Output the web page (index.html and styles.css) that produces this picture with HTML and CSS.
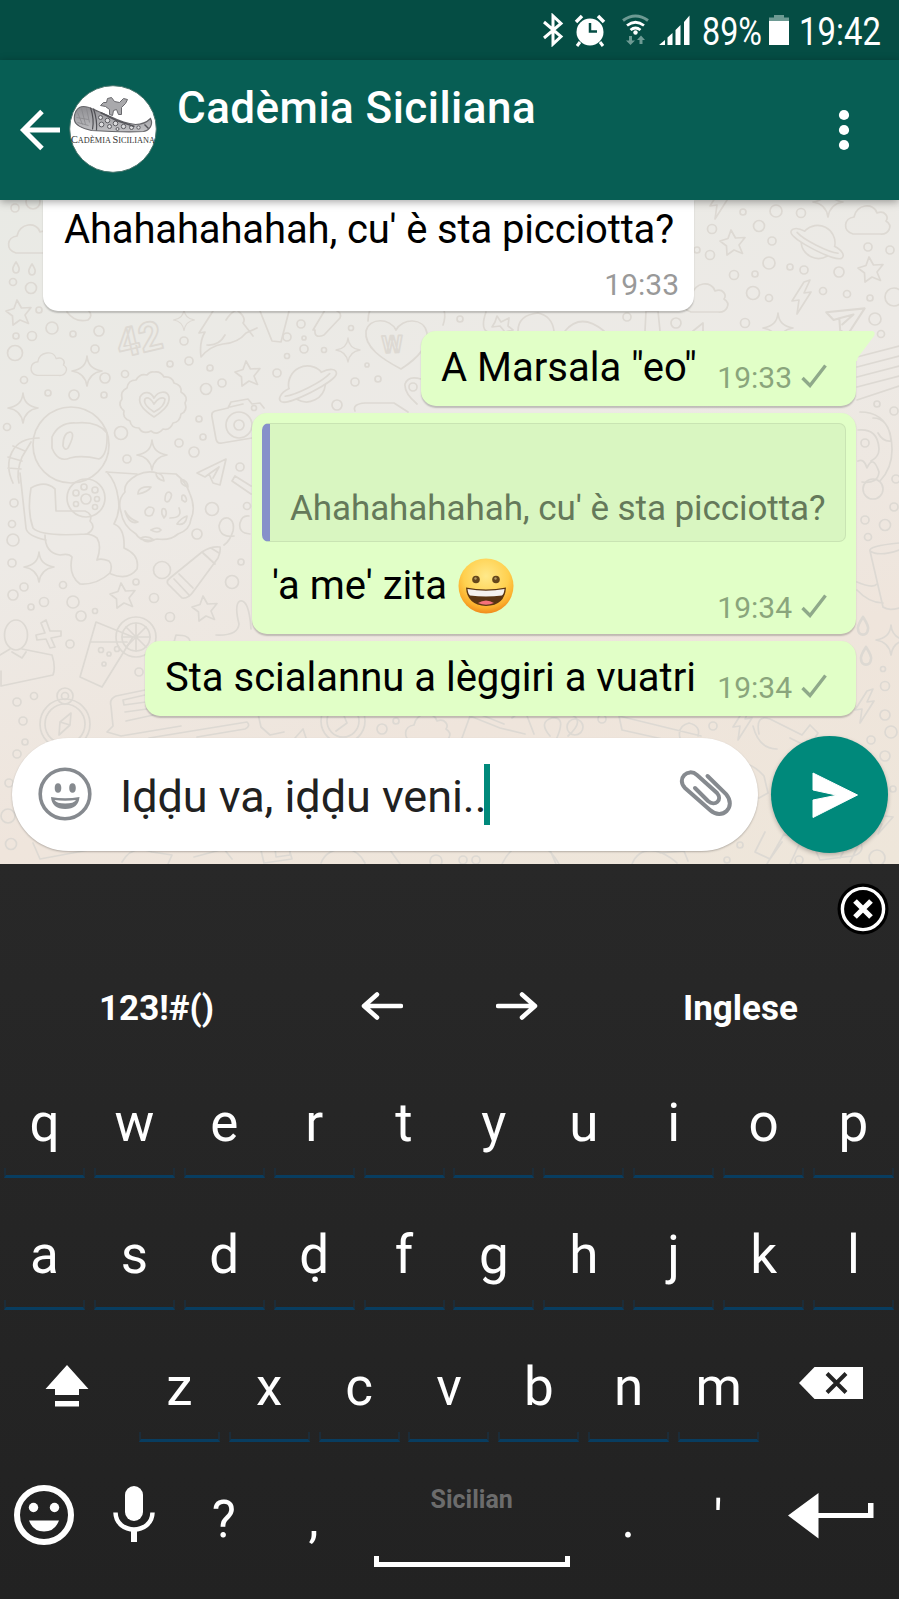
FILE: index.html
```html
<!DOCTYPE html>
<html lang="scn">
<head>
<meta charset="utf-8">
<title>Cadèmia Siciliana</title>
<link rel="stylesheet" href="styles.css">
</head>
<body>
<div class="phone">
  <div class="status">
    <svg class="st-bt" width="22" height="34" viewBox="0 0 22 34" fill="none" stroke="#fff" stroke-width="3"><path d="M2 9 19 23.500 11 31V3l8 7.500L2 25"/></svg>
    <svg class="st-alarm" width="32" height="34" viewBox="574 14 32 34"><circle cx="590" cy="32" r="13.500" fill="#fff"/><path d="M576 22l6-6M604 22l-6-6" stroke="#fff" stroke-width="3.500"/><path d="M580 42l-3 4M600 42l3 4" stroke="#fff" stroke-width="3"/><path d="M590 23v8.500h7" fill="none" stroke="#054d44" stroke-width="2.500"/></svg>
    <svg class="st-wifi" width="28" height="34" viewBox="621 13 28 34" fill="none"><path d="M623 20.500q12.500-9 25 0" stroke="#6d9a93" stroke-width="3"/><path d="M627 25.500q8.500-6.500 17 0M630.500 30q5-4 10 0" stroke="#fff" stroke-width="2.800"/><circle cx="635.500" cy="32.500" r="2.200" fill="#fff"/><path d="M629 36h3v4.500h3l-4.500 4.500-4.500-4.500h3zM639.500 44h3v-4h2.500l-4-4.500-4 4.500h2.500z" fill="#6d9a93"/></svg>
    <svg class="st-signal" width="31" height="31" viewBox="0 0 31 31" fill="#fff"><path d="M0 30 6 25v5zM8.500 22.500l5-4.500V30h-5zM16.500 15l5-5v20h-5zM25 7l5.500-6.500V30H25z"/></svg>
    <span class="st-text st-pct">89%</span>
    <svg class="st-batt" width="20" height="31" viewBox="0 0 20 31"><path d="M5 0h10v2.500h5V6H0V2.500h5z" fill="#6d9a93"/><path d="M0 6h20v24H0z" fill="#fff"/></svg>
    <span class="st-text st-clock">19:42</span>
  </div>

  <header class="header">
    <svg class="back" width="42" height="42" viewBox="19 109 42 42" fill="none" stroke="#fff" stroke-width="5"><path d="M60 130H24M42 111.500 23.500 130 42 148.500"/></svg>
    <svg class="avatar" width="88" height="88" viewBox="69.500 85.500 88 88">
      <defs><linearGradient id="boot" x1="0" y1="0" x2="0" y2="1"><stop offset="0" stop-color="#8d8d91"/><stop offset="1" stop-color="#c2c2c5"/></linearGradient></defs>
      <circle cx="113.500" cy="129.500" r="43.300" fill="#fff" stroke="#49746c"/>
      <path d="M75 121c-1-8 3-14 9-14 5 0 10 3 15 5l14 6c8 4 15 6 23 7 6 0 11-2 15-6 3 6-1 12-7 13-18 1-36 0-52-1-9-2-16-5-17-10z" fill="url(#boot)" stroke="#66666a" stroke-width="1.200"/>
      <path d="M91 108q4 12 2 22M94 109q4 12 3 22" fill="none" stroke="#505055" stroke-width="1.200"/>
      <path d="M78 113l5 12M82 109l4 16M87 109l3 14M77 118l12 2M78 123l11 3" stroke="#88888c" stroke-width=".8"/>
      <g fill="#dcdcde" stroke="#5d5d62" stroke-width="1"><circle cx="101" cy="118" r="2"/><circle cx="108" cy="121" r="2.300"/><circle cx="102" cy="125" r="2.400"/><circle cx="116" cy="124" r="2.300"/><circle cx="110" cy="127" r="2"/><circle cx="124" cy="127" r="2.200"/><circle cx="118" cy="129.500" r="1.500"/><circle cx="132" cy="128" r="2"/><circle cx="139" cy="128" r="1.700"/></g>
      <path d="M101 113l8 4 8 4 9 3 9 3M145 125l4 4" fill="none" stroke="#55555a" stroke-width="1.400"/>
      <path d="M101 106l3-3 3 0 1-4 4-1 3 4 5 1 4-4 4 1-2 4-4 4 0 7-3 0-2-5-3 1-1 5-3-1 0-5-4-3z" fill="#a9a9ac" stroke="#68686c"/>
      <text class="ava-text" x="71.500" y="143" textLength="84" lengthAdjust="spacingAndGlyphs"><tspan font-size="10">C</tspan>ADÈMIA <tspan font-size="10">S</tspan>ICILIANA</text>
    </svg>
    <h1 class="title">Cadèmia Siciliana</h1>
    <svg class="more" width="12" height="42" viewBox="838 109 12 42" fill="#fff"><circle cx="844" cy="115" r="5.100"/><circle cx="844" cy="130" r="5.100"/><circle cx="844" cy="145" r="5.100"/></svg>
  </header>

  <main class="chat">
    <svg class="wallpaper" width="899" height="664" viewBox="0 200 899 664" aria-hidden="true">
      <defs>
        <path id="star" d="M-2-13 2.500-5 12-5.500 6 2 9.500 10.500 1 7-6 12-6.500 3-13-2-5-4.500Z"/>
        <path id="spark" d="M0-15Q1-2 15 0 2 2 0 15-2 2-15 0-1-2 0-15Z"/>
        <path id="cloud" d="M-15 13C-26 10-24-3-14-4-12-17 6-19 9-8 17-11 21-4 18 0 26 5 20 14 12 13Z"/>
        <g id="planet"><path d="M-18-5A19 19 0 0 1 18-5M-16 9A19 19 0 0 0 16 9"/><path d="M-18-4C-28-4-33 0-31 4-27 11 27 11 31 4 33 0 28-4 18-4"/><path d="M-25 1C-15 5 15 5 25 1"/></g>
        <path id="drop" d="M0-5Q-4 1-3 3A3 3 0 0 0 3 3Q4 1 0-5Z"/>
        <path id="bolt" d="M2-14-10 5-3 4-5 18 9-4 2-3 8-16Z"/>
        <path id="plane" d="M15-14-14 0-6 4-2 1 2 10 9 12ZM-2 1 8-6M2 5 8-6"/>
      </defs>
      <g class="doodle">
        <g id="bubbles">
          <circle cx="13" cy="282" r="3.500"/><circle cx="31" cy="288" r="5.500"/><circle cx="39" cy="310" r="3"/><circle cx="52" cy="328" r="6"/><circle cx="16" cy="336" r="3"/><circle cx="32" cy="336" r="4.500"/><circle cx="73" cy="334" r="3"/><circle cx="99" cy="331" r="5"/><circle cx="15" cy="353" r="7.500"/><circle cx="95" cy="349" r="4"/><circle cx="105" cy="378" r="5"/><circle cx="125" cy="374" r="3.500"/><circle cx="24" cy="380" r="3.500"/><circle cx="48" cy="393" r="3"/><circle cx="74" cy="395" r="5"/><circle cx="104" cy="395" r="3"/><circle cx="15" cy="208" r="4"/><circle cx="33" cy="202" r="7"/>
          <circle cx="184" cy="341" r="4"/><circle cx="189" cy="361" r="4"/><circle cx="170" cy="364" r="3"/><circle cx="210" cy="368" r="3"/><circle cx="222" cy="383" r="4"/><circle cx="206" cy="389" r="5.500"/><circle cx="199" cy="419" r="3"/><circle cx="277" cy="373" r="4"/><circle cx="301" cy="324" r="4"/><circle cx="287" cy="337" r="4"/><circle cx="304" cy="338" r="2"/><circle cx="304" cy="349" r="4"/><circle cx="324" cy="350" r="2.500"/><circle cx="287" cy="356" r="2.500"/><circle cx="351" cy="328" r="2.500"/><circle cx="367" cy="365" r="2"/><circle cx="355" cy="382" r="4"/><circle cx="378" cy="379" r="3"/><circle cx="337" cy="405" r="5"/>
          <circle cx="7" cy="427" r="3.500"/><circle cx="121" cy="433" r="6.500"/><circle cx="179" cy="443" r="4"/><circle cx="203" cy="437" r="3"/><circle cx="194" cy="452" r="5"/><circle cx="127" cy="459" r="4"/><circle cx="240" cy="467" r="4"/><circle cx="212" cy="509" r="6.500"/><circle cx="247" cy="506" r="3.500"/><circle cx="197" cy="534" r="5"/><circle cx="14" cy="503" r="4"/><circle cx="12" cy="524" r="3.500"/><circle cx="13" cy="540" r="6"/><circle cx="12" cy="563" r="4"/><circle cx="24" cy="587" r="4"/><circle cx="13" cy="595" r="5"/><circle cx="31" cy="607" r="3"/><circle cx="44" cy="602" r="4.500"/><circle cx="63" cy="585" r="3.500"/><circle cx="73" cy="602" r="6"/><circle cx="81" cy="616" r="5"/><circle cx="95" cy="611" r="2.500"/><circle cx="136" cy="582" r="3"/><circle cx="162" cy="570" r="8.500"/><circle cx="154" cy="598" r="4.500"/><circle cx="241" cy="562" r="3"/><circle cx="232" cy="582" r="6.500"/><circle cx="170" cy="617" r="4.500"/><circle cx="70" cy="644" r="4"/><circle cx="17" cy="702" r="4"/><circle cx="34" cy="696" r="3.500"/><circle cx="139" cy="672" r="4"/>
          <circle cx="743" cy="212" r="3"/><circle cx="776" cy="211" r="6"/><circle cx="801" cy="213" r="4.500"/><circle cx="759" cy="226" r="5.500"/><circle cx="712" cy="229" r="4.500"/><circle cx="772" cy="241" r="4"/><circle cx="710" cy="255" r="4.500"/><circle cx="697" cy="250" r="3"/><circle cx="868" cy="247" r="4"/><circle cx="890" cy="250" r="4"/><circle cx="769" cy="263" r="6"/><circle cx="790" cy="267" r="3"/><circle cx="804" cy="270" r="4"/><circle cx="839" cy="272" r="5"/><circle cx="734" cy="275" r="4.500"/><circle cx="755" cy="274" r="3"/><circle cx="753" cy="293" r="6.500"/><circle cx="769" cy="298" r="3.500"/><circle cx="823" cy="291" r="3.500"/><circle cx="847" cy="294" r="3.500"/><circle cx="870" cy="298" r="3"/><circle cx="894" cy="297" r="9"/><circle cx="875" cy="319" r="6"/><circle cx="881" cy="334" r="3.500"/><circle cx="676" cy="323" r="5"/><circle cx="627" cy="317" r="4"/><circle cx="745" cy="323" r="4.500"/><circle cx="460" cy="319" r="3"/><circle cx="877" cy="404" r="3"/><circle cx="894" cy="411" r="4"/>
          <circle cx="896" cy="479" r="4"/><circle cx="894" cy="507" r="4"/><circle cx="865" cy="520" r="4"/><circle cx="885" cy="525" r="5.500"/><circle cx="868" cy="537" r="3.500"/><circle cx="883" cy="669" r="2.500"/><circle cx="885" cy="686" r="4.500"/><circle cx="885" cy="715" r="5"/><circle cx="891" cy="732" r="6"/><circle cx="871" cy="740" r="4"/><circle cx="885" cy="756" r="5"/><circle cx="893" cy="789" r="3"/><circle cx="740" cy="845" r="3"/><circle cx="727" cy="860" r="3"/><circle cx="799" cy="860" r="4"/><circle cx="877" cy="858" r="8"/><circle cx="713" cy="726" r="4"/><circle cx="602" cy="719" r="4"/><circle cx="575" cy="727" r="8"/><circle cx="382" cy="729" r="5"/><circle cx="396" cy="721" r="3"/><circle cx="23" cy="721" r="4"/><circle cx="25" cy="742" r="3"/><circle cx="17" cy="754" r="4"/><circle cx="9" cy="783" r="4"/><circle cx="8" cy="816" r="7"/><circle cx="11" cy="844" r="5.500"/><circle cx="463" cy="860" r="4"/><circle cx="476" cy="860" r="4"/><circle cx="436" cy="861" r="6"/>
        </g>
        <use href="#star" x="19" y="313"/><use href="#star" x="248" y="374"/><use href="#star" x="733" y="243"/><use href="#star" x="871" y="270"/><use href="#star" x="123" y="596"/><use href="#star" x="205" y="609"/>
        <use href="#spark" x="87" y="371"/><use href="#spark" x="23" y="408"/><use href="#spark" x="39" y="567"/><use href="#spark" x="891" y="640"/><use href="#spark" x="152" y="455"/>
        <use href="#spark" transform="translate(184 320) scale(.7)"/><use href="#spark" transform="translate(348 350) scale(.8)"/><use href="#spark" x="778" y="328"/><use href="#spark" x="828" y="202"/><use href="#bolt" x="720" y="201"/>
        <use href="#cloud" x="31" y="240"/><use href="#cloud" x="868" y="221"/><use href="#cloud" x="706" y="299"/><use href="#cloud" transform="translate(49 365) scale(.8)"/><use href="#cloud" x="428" y="729"/>
        <use href="#planet" transform="translate(307 384) rotate(-27)"/><use href="#planet" transform="translate(818 242) rotate(27) scale(.92)"/>
        <use href="#drop" x="16" y="267"/><use href="#drop" x="32" y="269"/><use href="#drop" transform="translate(863 625) scale(1.600)"/><use href="#drop" transform="translate(866 655) scale(1.600)"/>
        <use href="#bolt" x="802" y="296"/><use href="#bolt" x="865" y="705"/><use href="#bolt" x="743" y="722"/>
        <use href="#plane" x="211" y="473"/><use href="#plane" transform="translate(842 318) rotate(20) scale(1.200)"/>
        <text class="wall-text" transform="translate(120 358) rotate(-13)" font-size="40">42</text>
        <path d="M401 369C382 359 364 347 366 331 370 317 390 318 396 330 402 318 424 317 427 333 429 348 415 360 401 369Z"/>
        <text class="wall-text" transform="translate(382 353) rotate(-2)" font-size="24">W</text>
        <path d="M368 321q0-12 8-21M443 325q3-8 1-15M313 330l12-20q10-4 12 1 5 2 3 7l-16 17q-10 4-9-5z"/>
        <path d="M154 372q7-1 10 5 8-1 10 6 8 2 7 9 8 5 4 11 3 8-4 11-1 8-8 9-3 8-10 6-6 7-12 2-8 4-12-3-8 0-9-7-8-3-6-10-7-6-2-12-2-8 5-11 1-8 9-8 4-7 11-5 3-4 7-3Z"/>
        <path d="M154 417C145 411 138 405 140 397 144 390 151 392 154 398 158 391 167 390 169 397 170 405 163 411 154 417Z M154 412C148 408 143 403 145 399 148 396 152 400 154 404 157 399 162 396 165 399 165 405 160 409 154 412Z"/>
        <path d="M215 411l13-3 3-6 17-3 4 5 8-1 4 5M215 411q-4 1-3 6l4 22q1 5 6 4l30-5M230 407l13-3"/><circle cx="239" cy="425" r="13"/><circle cx="239" cy="425" r="5"/><circle cx="254" cy="408" r="2.500"/>
        <path d="M213 311l-14 22 6-1q-6 10-4 25 9-11 22-13 15-1 23-11l11-5M207 345q12 1 18-10M226 320q5-8 11-10 10 8 6 13l10 13M260 311l12 30 9 1 8-31M67 312q8 11 21 8 5-4 1-9"/>
        <circle cx="71" cy="445" r="38"/><path d="M52 437q7-15 24-14 22-2 31 10 1 22-8 26-17-4-29-1-12 5-18-10 0-6 0-11zM63 446q0-13 7-14 6 1-2 16-3 3-5-2M39 438q-20 0-27 14-7 14 1 31M31 442l-9 15q-6 15-3 26M8 457l14 4M8 468l13 1M13 446l12 5"/>
        <path d="M20 473l6 55q1 8 20 12M31 488q-4 23 2 40 8 9 54 6 10-6 3-13 3-7-5-10H56l-1-22q-10-9-24-1M45 535q0 18 15 20 9-2 12 2-4 18 8 27 17 1 30-11 3-8-1-12-8-3-12-1 5-14 0-22-5-4-12-4M107 472q9 10 11 25 3 14-4 27 11 4 10 24 16 7 13 21-9 12-26 5M106 472q15 1 31 2"/>
        <circle cx="86" cy="498" r="19"/><circle cx="86" cy="499" r="5"/><circle cx="76" cy="493" r="3"/><circle cx="84" cy="487" r="3"/><circle cx="95" cy="490" r="3"/><circle cx="97" cy="499" r="2.500"/><circle cx="76" cy="504" r="2.500"/><circle cx="95" cy="507" r="2.500"/>
        <path d="M137 475q11-5 20-2l19 1q10 8 14 20 6 14 1 25-1 11-13 15-8 7-21 5-16 4-21-5-13-8-15-22-4-12 4-20-2-9 12-17zM138 494q0-8 13-7-3 5-13 7M156 473q7 0 8 8-8-2-8-8M181 479q7 2 7 8-8-2-7-8M125 511q4 8 13 11-9 3-13-11M141 538q6-3 13 2-8 4-13-2M177 524q4-6 10-8-1 10-10 8M170 518q13 0 9-10M146 515q-3-5 3-8 8 0 3 8-3 2-6 0M165 500q0-8 4-8 5 2 0 9-3 2-4-1M151 530q7-4 10 0-3 4-10 0M162 514q-1-7 3-5 3 5-1 9zM182 500q-1-7 3-4 3 5 0 6z"/>
        <path d="M168 584l14 14q6 1 11-6l25-34q3-7 2-11-9-1-18 5l-32 26q-4 3-2 6zM174 579l15 16M179 574l14 14M203 553l12 11M211 548l8 5M232 481l19 13M232 481l3-5 16 10M234 536q-14 2-15-10 2-9 9-8 7 3 5 13-3 10-9 14M250 534q-12-1-10-11 2-8 9-7"/>
        <ellipse cx="16" cy="635" rx="11.500" ry="15"/><path d="M10 649l-10 6M22 649l30 6q4 12 1 20L1 686v-15M12 652l10 6 4-6M46 620l4 11 11 0v5l-10 2 4 9-5 1-4-9-9 1-1-5 9-2-4-10z"/>
        <path d="M96 622l37 15-31 50-22-10zM91 642h36"/><circle cx="136" cy="637" r="20"/><circle cx="136" cy="637" r="14"/><path d="M122 637h28M136 623v28M126 627l20 20M146 627l-20 20"/><circle cx="101" cy="650" r="2.500"/><circle cx="109" cy="654" r="2"/><circle cx="117" cy="649" r="2.500"/><circle cx="104" cy="664" r="2"/>
        <circle cx="65" cy="724" r="25"/><circle cx="65" cy="724" r="20"/><circle cx="65" cy="696" r="8"/><circle cx="65" cy="696" r="3.500"/><path d="M71 713l-11 9-1 13 11-10zM60 722l10 3"/>
        <path d="M145 690l-29 6q-7 3-5 10l2 20-6 6 14 4 60-10M145 695l-22 5 1 5 22-3M125 712l44-6M126 721l110-24 20 8 5 22 9 8 14-3M149 738l98-16q4 4-2 7l-48 8M295 738l8-9 4 12M216 635q22 1 23-11-5-20 1-23 9-2 11 28M174 642l2-7q14 0 14 7"/>
        <circle cx="343" cy="721" r="22"/><circle cx="343" cy="721" r="16"/><path d="M342 711l5 12-11 8M462 738l8-22 30 12 25 6M474 712l30 12M512 718l12-10 10 26M550 736q-12-14 2-18 15-2 4 22M568 736q18-16 2-22M619 716l82 20M619 716l3 14 54 12M680 738q-3-12 9-15 12 3 9 13M759 734q-4-20 11-15l32 16 8-10 8 8q-6 12-18 10l-10-5M753 726q6 23 24 23"/>
        <circle cx="413" cy="387" r="4"/><path d="M417 404q-13-11-12-20 3-9 16-5M355 411q-3-7 10-8h29l14 9M486 312q-6 17 2 20l12 3M497 316l4 6 8-4-1 8 5 4-8 2-5-6-8 1 3-5zM518 331q0-16 20-18 14 3 16 18M565 331q16-19 39 0M645 331l1-20h12l2 20M693 331l10-8v8"/>
        <path d="M857 357l42-11M857 367l42-11M857 377l42-11M857 387l42-11M857 400l42-14M860 412q23 0 30 21 7 30-10 48M873 418q16 0 18 23-8 1-13-8M858 430q20-2 21 19 0 8-8 12M858 461q6-3 9 7 6-14 12 4-1 12-17 10"/><circle cx="865" cy="443" r="4"/><circle cx="873" cy="489" r="10"/>
        <path d="M870 551l13 56q5 4 16 1M870 551q-2-5 29-8M870 551q9 6 29-1M857 582q16 7 20 2M857 590q12 13 26 13M759 798l9-5-4-17q-8-9-17-12-3 6 6 10M790 864l12-26M804 843l-20-9-17 30M840 858l15-28M850 862l16-32M830 850l25-46M765 832l-10 20 15 7 12-17M810 838l10 22 33-4q14-4 6-17M882 808l-8 15 8 1-4 10 15-17-8-1"/>
        <path d="M33 843l7 16 54-10 5-9M122 862q10-18 30-10l20 3-4 9M194 857l30-8 8 10M260 846l4 17 28-4-5-17zM275 848l15 0 0 7-14 2zM321 863q6-15 26-14 12 2 18 14M502 864q13-27 40-18 10 5 17 18M390 850l10 14M550 850l6 14M632 864q8-19 30-11 10 5 15 10M660 853l24-2 4 10"/>
      </g>
    </svg>

    <section class="messages">
      <div class="bubble in first">
        <p class="text">Ahahahahahah, cu' è sta picciotta?</p>
        <span class="time">19:33</span>
      </div>
      <div class="bubble out single second">
        <svg class="tail" width="22" height="32" viewBox="0 0 22 32"><path d="M0 0h17.500q3.500 1 1.500 5L4 25q-2 2-2 5H0z" fill="#e1ffc7"/></svg>
        <p class="text">A Marsala "eo"</p>
        <span class="meta"><span class="time">19:33</span><svg class="tick" width="26" height="24" viewBox="0 0 26 24"><path d="M1.500 14 9 21.500 24.500 1.500" /></svg></span>
      </div>
      <div class="bubble out reply">
        <div class="quote"><p>Ahahahahahah, cu' è sta picciotta?</p></div>
        <div class="reply-row">
          <p class="text">'a me' zita</p>
          <svg class="grin" width="56" height="56" viewBox="0 0 56 56">
            <defs><radialGradient id="face" cx=".5" cy=".32" r=".68"><stop offset="0" stop-color="#ffe98a"/><stop offset=".6" stop-color="#ffd04e"/><stop offset=".85" stop-color="#fbae2c"/><stop offset="1" stop-color="#f08a1c"/></radialGradient></defs>
            <circle cx="28" cy="28" r="27.500" fill="url(#face)"/>
            <circle cx="18" cy="21.500" r="3.800" fill="#65471b"/><circle cx="38" cy="21.500" r="3.800" fill="#65471b"/><circle cx="17.500" cy="20.500" r="1.200" fill="#b39a62"/><circle cx="37.500" cy="20.500" r="1.200" fill="#b39a62"/>
            <path d="M8 29.500q20 4 40 0-1 18-20 18.500Q9 47 8 29.500z" fill="#5a3512"/>
            <path d="M9.500 31q18.500 3.500 37 0-.5 5-2.500 6.500-16 2-32 0Q10 36 9.500 31z" fill="#f4f1ee"/>
            <path d="M20 45q8-5 16 0-8 3.500-16 0z" fill="#f5717b"/>
          </svg>
          <span class="meta"><span class="time">19:34</span><svg class="tick" width="26" height="24" viewBox="0 0 26 24"><path d="M1.500 14 9 21.500 24.500 1.500" /></svg></span>
        </div>
      </div>
      <div class="bubble out single fourth">
        <p class="text">Sta scialannu a lèggiri a vuatri</p>
        <span class="meta"><span class="time">19:34</span><svg class="tick" width="26" height="24" viewBox="0 0 26 24"><path d="M1.500 14 9 21.500 24.500 1.500" /></svg></span>
      </div>
    </section>

    <div class="composer">
      <div class="field">
        <svg class="smile" width="54" height="54" viewBox="0 0 54 54"><circle cx="27" cy="27" r="24.800" fill="none" stroke="#868a8f" stroke-width="3.600"/><ellipse cx="20" cy="21" rx="3.300" ry="4.700" fill="#868a8f"/><ellipse cx="34.500" cy="21" rx="3.300" ry="4.700" fill="#868a8f"/><path d="M13 30q14 2.500 28.500 0-1 12-14.300 12T13 30zM16.500 33q2 3.500 10.700 3.500T38 33q-11 1.500-21.500 0z" fill="#868a8f" fill-rule="evenodd"/></svg>
        <span class="draft">Iḍḍu va, iḍḍu veni..</span><span class="caret"></span>
        <svg class="clip" width="54" height="50" viewBox="678 770 54 50" fill="none" stroke="#868a8f" stroke-width="4" stroke-linecap="round"><path d="M707.500 777l18.500 18c11 13-4 27-16 16L685 789c-9-9 3-21 12-13l20 18c6 7-2 14-9 8l-13-13"/></svg>
      </div>
      <div class="send"><svg width="48" height="46" viewBox="0 0 48 46"><path d="M2 1 46.500 23 2 45.500V28l24-4.800L2 18z" fill="#fff" stroke="#fff" stroke-linejoin="round"/></svg></div>
    </div>
  </main>

  <section class="keyboard">
    <div class="close-row"><svg width="52" height="52" viewBox="0 0 52 52"><circle cx="26" cy="26" r="25.500" fill="#000"/><circle cx="26" cy="26" r="20.600" fill="none" stroke="#fff" stroke-width="3.400"/><path d="M18 18l16 16M34 18 18 34" stroke="#fff" stroke-width="5.200"/></svg></div>
    <div class="tools">
      <span class="tool sym">123!#()</span>
      <svg class="left" width="42" height="28" viewBox="0 0 42 28"><path d="M40 14H3M16 2.500 3 14 16 25.500"/></svg>
      <svg class="right" width="42" height="28" viewBox="0 0 42 28"><path d="M2 14h37M26 2.500 39 14 26 25.500"/></svg>
      <span class="tool lang">Inglese</span>
    </div>
    <div class="row">
      <div class="key"><b>q</b><i></i></div><div class="key"><b>w</b><i></i></div><div class="key"><b>e</b><i></i></div><div class="key"><b>r</b><i></i></div><div class="key"><b>t</b><i></i></div><div class="key"><b>y</b><i></i></div><div class="key"><b>u</b><i></i></div><div class="key"><b>i</b><i></i></div><div class="key"><b>o</b><i></i></div><div class="key"><b>p</b><i></i></div>
    </div>
    <div class="row">
      <div class="key"><b>a</b><i></i></div><div class="key"><b>s</b><i></i></div><div class="key"><b>d</b><i></i></div><div class="key"><b>ḍ</b><i></i></div><div class="key"><b>f</b><i></i></div><div class="key"><b>g</b><i></i></div><div class="key"><b>h</b><i></i></div><div class="key"><b>j</b><i></i></div><div class="key"><b>k</b><i></i></div><div class="key"><b>l</b><i></i></div>
    </div>
    <div class="row third">
      <div class="wide"><svg width="44" height="42" viewBox="0 0 44 42" fill="#fff"><path d="M22 0 43.500 24H34v6H10v-6H.500zM10 36h24v5.500H10z"/></svg></div>
      <div class="key"><b>z</b><i></i></div><div class="key"><b>x</b><i></i></div><div class="key"><b>c</b><i></i></div><div class="key"><b>v</b><i></i></div><div class="key"><b>b</b><i></i></div><div class="key"><b>n</b><i></i></div><div class="key"><b>m</b><i></i></div>
      <div class="wide del"><svg width="64" height="32" viewBox="0 0 64 32"><path d="M0 16 15.500 0H64v32H15.500z" fill="#fff"/><path d="M28 6.500l19 19M47 6.500l-19 19" stroke="#242424" stroke-width="4"/></svg></div>
    </div>
    <div class="bottom">
      <div class="cell"><svg class="kb-smile" width="60" height="60" viewBox="0 0 60 60"><circle cx="30" cy="30" r="27" fill="none" stroke="#fff" stroke-width="6"/><circle cx="19.500" cy="22.500" r="4.700" fill="#fff"/><circle cx="40.500" cy="22.500" r="4.700" fill="#fff"/><path d="M15 35.500h30q-4 11-15 11t-15-11z" fill="#fff"/></svg></div>
      <div class="cell"><svg class="kb-mic" width="42" height="56" viewBox="0 0 42 56"><rect x="12" y="0" width="18" height="35" rx="9" fill="#fff"/><path d="M2.500 26.500C3 49 39 49 39.500 26.500" fill="none" stroke="#fff" stroke-width="4.500"/><path d="M18 43h6v13h-6z" fill="#fff"/></svg></div>
      <div class="cell"><b>?</b></div>
      <div class="cell"><b>,</b></div>
      <div class="space"><span>Sicilian</span><i></i></div>
      <div class="cell"><b>.</b></div>
      <div class="cell"><b>'</b></div>
      <div class="cell enter"><svg width="86" height="46" viewBox="0 0 86 46" fill="#fff"><path d="M0 22.500 30.500 0v20H80V10h5.500v15H30.500v20.500z"/></svg></div>
    </div>
  </section>
</div>
</body>
</html>
```
FILE: styles.css
```css
* { box-sizing: border-box; margin: 0; padding: 0; }
body { font-family: Roboto, "Noto Sans", sans-serif; width: 899px; height: 1599px; overflow: hidden; }
svg { display: block; flex: none; }
.phone { width: 899px; height: 1599px; display: flex; flex-direction: column; }

.status { height: 60px; flex: none; background: #054d44; display: flex; align-items: flex-start; padding-left: 542px; color: #fff; }
.st-bt { margin-top: 13px; }
.st-alarm { margin: 14px 0 0 10px; }
.st-wifi { margin: 13px 0 0 15px; }
.st-signal { margin: 15px 0 0 10px; }
.st-batt { margin: 15px 0 0 9px; }
.st-text { font-size: 38px; line-height: 40px; margin-top: 11.500px; white-space: nowrap; transform-origin: 0 0; transform: scaleX(.85); }
.st-pct { width: 58px; margin-left: 12px; }
.st-clock { width: 80px; margin-left: 10px; transform: scaleX(.865); }

.header { height: 140px; flex: none; background: #075e54; display: flex; align-items: flex-start; padding-left: 19px; position: relative; z-index: 2; box-shadow: 0 2px 8px rgba(0,0,0,.35); }
.back { margin-top: 49px; }
.avatar { margin: 25px 0 0 8px; }
.ava-text { font-family: "Liberation Serif", serif; font-size: 8px; fill: #333; }
.title { width: 660.500px; margin: 22px 0 0 20px; font-size: 44px; line-height: 52px; font-weight: 500; letter-spacing: .45px; color: #fff; white-space: nowrap; }
.more { margin: 49px 0 0 0; }

.chat { height: 664px; flex: none; position: relative; background: linear-gradient(165deg, #e9eae5 0%, #edeae6 40%, #efe5dc 72%, #eee6da 100%); }
.wallpaper { position: absolute; left: 0; top: 0; }
.doodle { fill: none; stroke: #ddd9d3; stroke-width: 1.700; stroke-linejoin: round; stroke-linecap: round; }
.wall-text { font-family: Roboto, sans-serif; font-weight: 700; }
.messages { position: relative; height: 538px; display: flex; flex-direction: column; align-items: flex-end; padding-right: 43px; }
.bubble { position: relative; border-radius: 15px; box-shadow: 0 1.500px 1.500px rgba(0,0,0,.2); }
.in { background: #fff; }
.out { background: #e1ffc7; }
.text { font-size: 40px; line-height: 48px; color: #000; white-space: nowrap; }
.time { font-size: 30px; line-height: 30px; color: #999; white-space: nowrap; }
.out .time { color: #8aa57c; }
.first { width: 651px; height: 110.500px; align-self: flex-start; margin-left: 43px; padding: 6px 15px 0 21px; border-radius: 0 0 15px 15px; display: flex; flex-direction: column; }
.first .text { letter-spacing: -.14px; }
.first .time { align-self: flex-end; margin-top: 16px; }
.single { height: 75px; display: flex; justify-content: space-between; padding: 12.500px 29px 0 20px; }
.single .meta { margin-top: 19px; }
.meta { display: flex; gap: 9px; }
.tick { margin-top: 1px; fill: none; stroke: #8fa98a; stroke-width: 3.400; }
.second { width: 435px; margin-top: 20.500px; border-top-right-radius: 0; }
.tail { position: absolute; left: 434px; top: 0; }
.reply { width: 604px; height: 221.500px; margin-top: 6.500px; padding: 10px; }
.quote { height: 119.500px; border-radius: 7px; border: 1px solid #c9e4b3; border-left: 8px solid #8690ca; background: #d9f6c1; padding: 65px 0 0 20px; }
.quote p { font-size: 35px; line-height: 40px; letter-spacing: -.07px; color: #65795a; white-space: nowrap; }
.reply-row { display: flex; align-items: flex-start; padding: 20px 19px 0 10px; }
.grin { margin: -4px 0 0 11px; }
.reply-row .meta { margin: 31px 0 0 auto; }
.fourth { width: 711px; margin-top: 7px; }

.composer { position: relative; display: flex; align-items: center; height: 116px; padding: 0 11px 0 12px; gap: 13px; margin-top: -2px; }
.field { width: 746px; height: 113px; border-radius: 57px; background: #fff; box-shadow: 0 1px 2px rgba(0,0,0,.25); display: flex; align-items: center; padding-left: 26px; }
.draft { font-size: 45px; line-height: 54px; color: #212121; letter-spacing: -.05px; margin: 5px 0 0 28px; white-space: nowrap; width: 364px; }
.caret { width: 5.500px; height: 61px; background: #00897b; }
.clip { margin-left: 188px; }
.send { width: 117px; height: 117px; border-radius: 50%; background: #00897b; box-shadow: 0 2px 4px rgba(0,0,0,.25); padding: 36px 0 0 40px; }

.keyboard { height: 735px; flex: none; background: linear-gradient(#282828, #222); color: #fff; }
.close-row { height: 94px; padding: 19px 0 0 837px; }
.tools { height: 89px; display: flex; align-items: flex-start; padding: 28px 0 0 99px; }
.tools svg { fill: none; stroke: #fff; stroke-width: 4.500; stroke-linecap: round; stroke-linejoin: round; margin-top: 6px; }
.tool { font-size: 35px; line-height: 42px; font-weight: 700; white-space: nowrap; margin-top: 2px; }
.sym { width: 262px; }
.right { margin-left: 93px; }
.lang { margin-left: 145px; }
.row { height: 132px; display: flex; }
.key { width: 89.900px; height: 132px; padding: 46px 5px 0 4px; display: flex; flex-direction: column; align-items: center; }
.key b { font-size: 53px; line-height: 60px; height: 60px; font-weight: 400; }
.key i { width: 81px; height: 10px; margin-top: 15px; flex: none; border: 2px solid #0a3048; border-top: 0; border-bottom: 3px solid #083d60; border-left-color: #1c2c38; border-right-color: #1c2c38; }
.wide { width: 134.850px; padding: 54px 0 0 45px; }
.del { padding: 56px 0 0 35px; }
.bottom { height: 156px; display: flex; }
.cell { width: 89.900px; display: flex; justify-content: center; padding-right: 2px; }
.cell b { font-size: 51px; line-height: 60px; font-weight: 400; margin-top: 47px; }
.kb-smile { margin-top: 42px; }
.kb-mic { margin-top: 43px; }
.space { width: 224.700px; padding: 42px 0 0 14px; display: flex; flex-direction: column; }
.space span { font-size: 25px; line-height: 30px; font-weight: 700; color: #6c6c6c; margin-left: 57px; }
.space i { width: 196px; height: 11px; margin-top: 41px; border: 5px solid #fff; border-top: 0; }
.enter { width: 134px; padding: 50px 0 0 24px; justify-content: flex-start; }
```
